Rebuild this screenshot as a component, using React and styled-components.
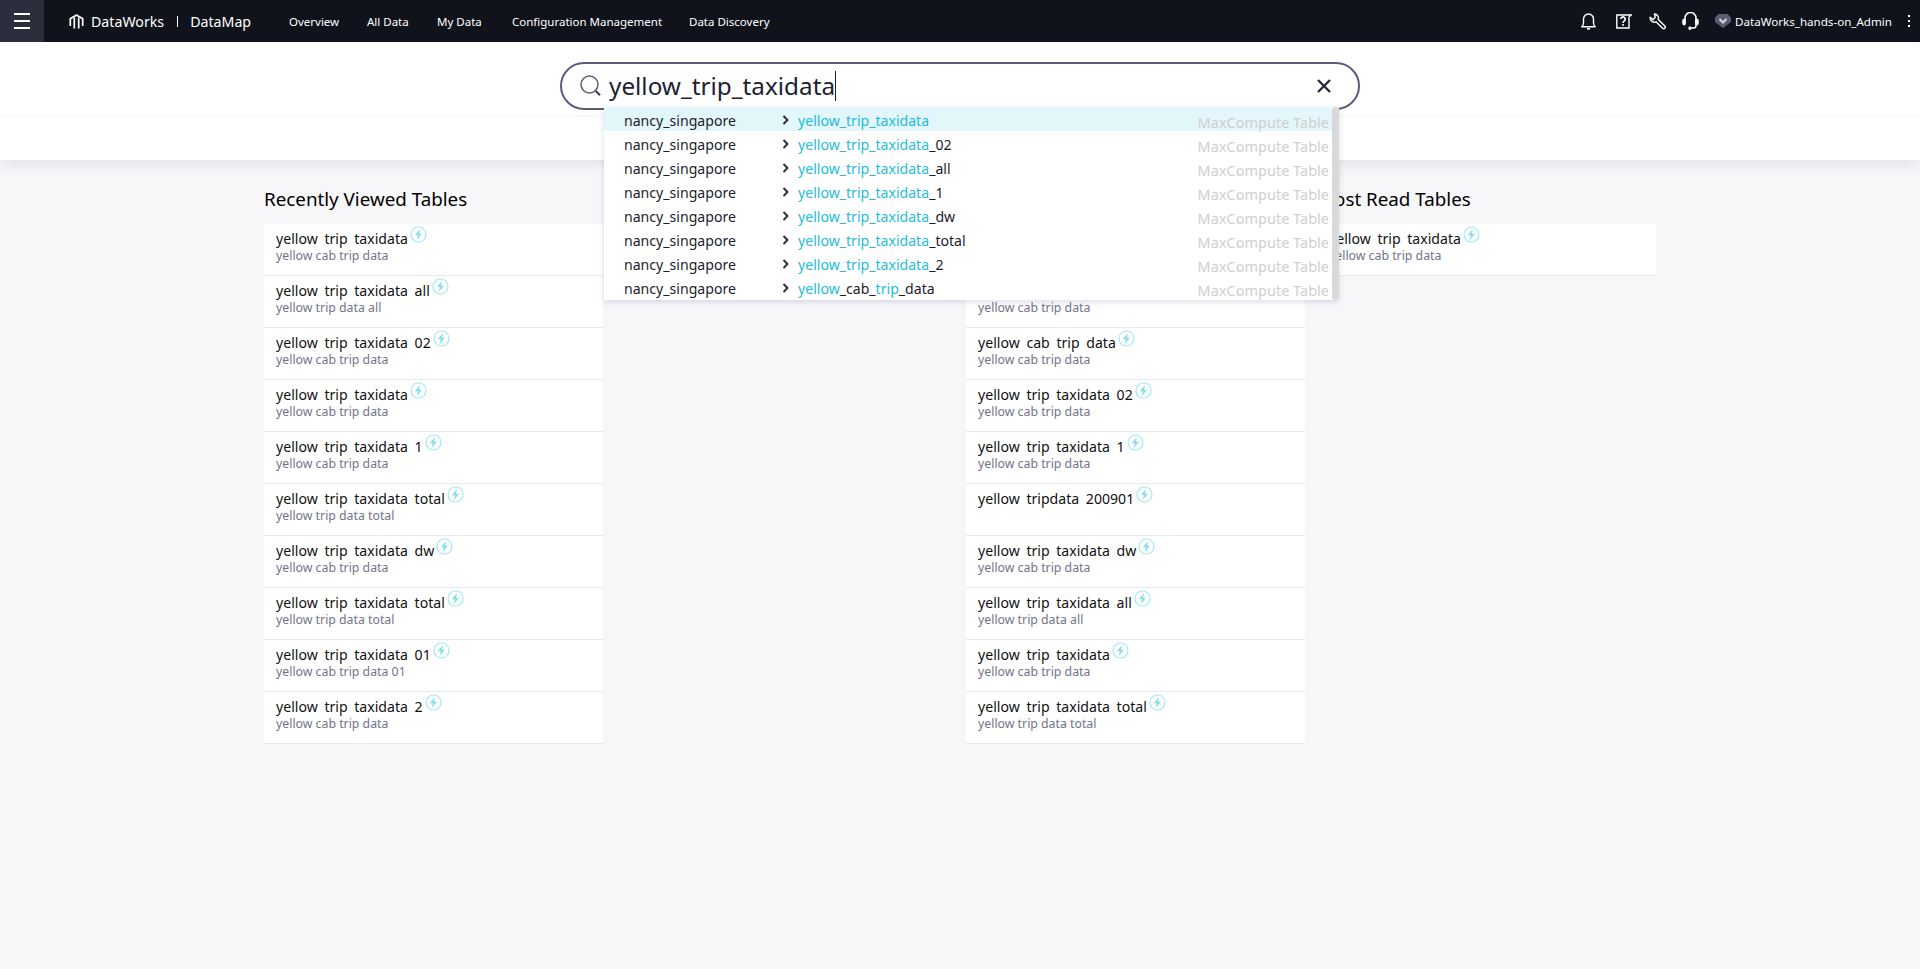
import React from 'react';
import styled, { createGlobalStyle } from 'styled-components';

const GlobalStyle = createGlobalStyle`
  html, body {
    margin: 0;
    padding: 0;
    height: 100%;
    overflow: hidden;
    background: #f7f7fa;
    font-family: "Noto Sans", "Liberation Sans", sans-serif;
  }
`;

const navItems = [
  { label: 'Overview', width: 78 },
  { label: 'All Data', width: 70 },
  { label: 'My Data', width: 75 },
  { label: 'Configuration Management', width: 177 },
  { label: 'Data Discovery', width: 90 },
];

const suggestions = [
  { hit: 'yellow_trip_taxidata', rest: '' },
  { hit: 'yellow_trip_taxidata', rest: '_02' },
  { hit: 'yellow_trip_taxidata', rest: '_all' },
  { hit: 'yellow_trip_taxidata', rest: '_1' },
  { hit: 'yellow_trip_taxidata', rest: '_dw' },
  { hit: 'yellow_trip_taxidata', rest: '_total' },
  { hit: 'yellow_trip_taxidata', rest: '_2' },
  { parts: ['yellow', '_cab_', 'trip', '_data'] },
];

const recentTables = [
  ['yellow trip taxidata', 'yellow cab trip data'],
  ['yellow trip taxidata all', 'yellow trip data all'],
  ['yellow trip taxidata 02', 'yellow cab trip data'],
  ['yellow trip taxidata', 'yellow cab trip data'],
  ['yellow trip taxidata 1', 'yellow cab trip data'],
  ['yellow trip taxidata total', 'yellow trip data total'],
  ['yellow trip taxidata dw', 'yellow cab trip data'],
  ['yellow trip taxidata total', 'yellow trip data total'],
  ['yellow trip taxidata 01', 'yellow cab trip data 01'],
  ['yellow trip taxidata 2', 'yellow cab trip data'],
];

const favouriteTables = [
  ['yellow trip taxidata', 'yellow cab trip data'],
  ['yellow cab trip data', 'yellow cab trip data'],
  ['yellow cab trip data', 'yellow cab trip data'],
  ['yellow trip taxidata 02', 'yellow cab trip data'],
  ['yellow trip taxidata 1', 'yellow cab trip data'],
  ['yellow tripdata 200901', ''],
  ['yellow trip taxidata dw', 'yellow cab trip data'],
  ['yellow trip taxidata all', 'yellow trip data all'],
  ['yellow trip taxidata', 'yellow cab trip data'],
  ['yellow trip taxidata total', 'yellow trip data total'],
];

const mostRead = [['yellow trip taxidata', 'yellow cab trip data']];

const Header = styled.header`
  height: 42px;
  background: #10131c;
  display: flex;
  align-items: center;
  color: #fff;
`;

const MenuButton = styled.div`
  width: 44px;
  height: 42px;
  background: #2b2e3d;
  display: flex;
  flex-direction: column;
  justify-content: center;
  align-items: center;
  gap: 5px;
  span {
    display: block;
    width: 16px;
    height: 2px;
    background: #fff;
  }
`;

const Logo = styled.div`
  display: flex;
  align-items: center;
  margin-left: 25px;
  width: 220px;
  font-size: 14.2px;
  svg { margin-right: 7px; }
`;

const LogoSep = styled.span`
  width: 1px;
  height: 11px;
  background: #fff;
  margin: 0 12px 0 13px;
`;

const NavItem = styled.a`
  font-size: 11.5px;
  color: #fff;
  white-space: nowrap;
  display: block;
  width: ${(p) => p.$width}px;
`;

const HeaderRight = styled.div`
  margin-left: auto;
  display: flex;
  align-items: center;
`;

const HeaderIcon = styled.span`
  width: ${(p) => p.$width || 33}px;
  height: 42px;
  display: flex;
  align-items: center;
  justify-content: ${(p) => (p.$end ? 'flex-end' : 'center')};
  margin-right: ${(p) => p.$gap || 0}px;
`;

const UserName = styled.span`
  font-size: 11.6px;
  margin-left: 4px;
  white-space: nowrap;
`;

const Dots = styled.span`
  display: flex;
  flex-direction: column;
  gap: 3px;
  margin: 0 10px 0 16px;
  i {
    display: block;
    width: 2px;
    height: 2px;
    background: #fff;
  }
`;

const SearchBand = styled.section`
  background: #fff;
  height: 118px;
  box-shadow: 0 4px 14px rgba(40, 40, 70, 0.1);
  position: relative;
`;

const SearchArea = styled.div`
  height: 73px;
  display: flex;
  justify-content: center;
  padding-top: 20px;
  box-sizing: border-box;
  box-shadow: 0 2px 4px rgba(40, 40, 70, 0.03);
`;

const SearchBox = styled.div`
  width: 800px;
  height: 48px;
  box-sizing: border-box;
  border: 2px solid #5c5c7c;
  border-radius: 24px;
  display: flex;
  align-items: center;
  padding: 0 26px 0 17px;
  position: relative;
  background: #fff;
`;

const SearchText = styled.div`
  font-size: 24.3px;
  line-height: 32px;
  color: #1c2233;
  margin-left: 6px;
  flex: 1;
  display: flex;
  align-items: center;
`;

const Caret = styled.i`
  display: block;
  width: 1px;
  height: 30px;
  background: #1c2233;
`;

const Dropdown = styled.div`
  position: absolute;
  left: 42px;
  top: 43px;
  width: 735px;
  height: 193px;
  background: #fff;
  box-shadow: 0 2px 6px rgba(60, 60, 110, 0.18);
  display: flex;
  z-index: 5;
`;

const DropList = styled.div`
  flex: 1 1 0;
  min-width: 0;
`;

const DropRow = styled.div`
  height: 24px;
  box-sizing: border-box;
  padding: 2px 0 0 20px;
  display: flex;
  align-items: center;
  background: ${(p) => (p.$active ? '#e3f7fb' : '#fff')};
  font-size: 14.1px;
  color: #1c1c2c;
  white-space: nowrap;
`;

const DropDb = styled.span`
  width: 156px;
`;

const DropChevron = styled.span`
  width: 18px;
  box-sizing: border-box;
  padding-left: 2px;
  display: flex;
  align-items: center;
`;

const DropName = styled.span`
  flex: 1;
`;

const Hit = styled.span`
  color: #1fbcdc;
`;

const DropType = styled.span`
  color: #cfcfcf;
  font-size: 14.5px;
  margin: 4px 3px 0 0;
`;

const DropScroll = styled.div`
  flex: 0 0 7px;
  height: 100%;
  background: #d9d9d9;
  border-radius: 3px;
`;

const Columns = styled.main`
  display: grid;
  grid-template-columns: repeat(4, 339px);
  column-gap: 12px;
  padding: 25px 0 0 264px;
`;

const ColumnTitle = styled.h3`
  margin: 0 0 11px;
  font-size: 18.8px;
  line-height: 28px;
  font-weight: 400;
  color: #000;
  height: 28px;
  white-space: nowrap;
`;

const TableRow = styled.div`
  height: 52px;
  box-sizing: border-box;
  background: #fff;
  border-bottom: 1px solid #e8e8ee;
  padding: 5px 12px 0;
`;

const TableName = styled.div`
  font-size: 14.1px;
  line-height: 20px;
  height: 19px;
  color: #111;
  word-spacing: 3px;
  display: flex;
  align-items: flex-start;
  white-space: nowrap;
  svg { margin: -3px 0 0 2px; }
`;

const TableDesc = styled.div`
  font-size: 12.3px;
  line-height: 16px;
  color: #73738a;
  white-space: nowrap;
`;

const Bolt = () => (
  <svg width="17" height="17" viewBox="0 0 17 17" fill="none">
    <circle cx="8.500" cy="8.500" r="7.500" stroke="#a4e8f5" strokeWidth="1.200" />
    <path d="M10 3 4.800 9.300h3l-1 4.700 5.200-6.300h-3z" fill="#84def2" />
  </svg>
);

const LogoMark = () => (
  <svg width="15" height="15" viewBox="0 0 15 15" fill="none" stroke="#fff" strokeWidth="1.700">
    <path d="M1.300 12V4.800L7.500 1l6.200 3.800V12" />
    <path d="M5.300 14.500V3.500M9.700 14.500V3.500" />
  </svg>
);

const BellIcon = () => (
  <svg width="15" height="17" viewBox="0 0 15 17" fill="none" stroke="#fff" strokeWidth="1.400">
    <path d="M.8 13.700c1.300-.9 1.700-2 1.700-4V6a5 5 0 0 1 10 0v3.700c0 2 .4 3.100 1.700 4z" strokeLinejoin="round" />
    <path d="M6 15.800h3" strokeWidth="1.600" />
  </svg>
);

const HelpIcon = () => (
  <svg width="16" height="15" viewBox="0 0 16 15" fill="none" stroke="#fff" strokeWidth="1.400">
    <path d="M.8 1h14.400l-2.200 2v11H.8z" />
    <path d="M4.800 5a2.200 2.200 0 1 1 3.500 1.900c-.9.600-1.300 1-1.300 2" strokeWidth="1.700" />
    <path d="M7 10v1.800" strokeWidth="1.700" />
  </svg>
);

const WrenchIcon = () => (
  <svg width="17" height="17" viewBox="0 0 17 17" fill="none" stroke="#fff" strokeWidth="1.400" strokeLinejoin="round">
    <path d="M5.400 1a4.200 4.200 0 0 1 3.800 5.600l6.600 6.500a1.500 1.500 0 0 1-2.200 2.200L7 8.800A4.200 4.200 0 0 1 1.200 4.200l2.700 2.500 2.300-2.500z" />
  </svg>
);

const HeadsetIcon = () => (
  <svg width="17" height="19" viewBox="0 0 17 19" fill="none" stroke="#fff" strokeWidth="1.500">
    <path d="M3 8V6a5.500 5.500 0 0 1 11 0v7.500a2.500 2.500 0 0 1-2.500 2.500H9" />
    <rect x=".8" y="7" width="2.600" height="6" rx="1.300" fill="#fff" strokeWidth="1" />
    <rect x="13.600" y="7" width="2.600" height="6" rx="1.300" fill="#fff" strokeWidth="1" />
    <circle cx="8" cy="16.200" r="1.300" fill="#fff" strokeWidth="1" />
  </svg>
);

const VipIcon = () => (
  <svg width="16" height="14" viewBox="0 0 16 14">
    <path d="M3.500 0h9L16 3.500V8l-8 6-8-6V3.500z" fill="#5c5d70" />
    <path d="m4.500 5 3.500 3.500L11.500 5" fill="none" stroke="#d7d7de" strokeWidth="2" />
  </svg>
);

const SearchIcon = () => (
  <svg width="24" height="24" viewBox="0 0 24 24" fill="none">
    <circle cx="10.500" cy="10.500" r="8.500" stroke="#5c5c7c" strokeWidth="1.500" />
    <path d="m16.800 17 4.200 4.300" stroke="#3c3c52" strokeWidth="2" />
  </svg>
);

const ClearIcon = () => (
  <svg width="16" height="16" viewBox="0 0 16 16" fill="none">
    <path d="m2 2 12 12M14 2 2 14" stroke="#262c3c" strokeWidth="2.400" />
  </svg>
);

const ChevronIcon = () => (
  <svg width="8" height="10" viewBox="0 0 8 10" fill="none">
    <path d="m1.500 1 4 4-4 4" stroke="#2a2a3a" strokeWidth="1.900" />
  </svg>
);

const TableList = ({ rows }) => (
  <div>
    {rows.map(([name, desc], i) => (
      <TableRow key={i}>
        <TableName>
          <span>{name}</span>
          <Bolt />
        </TableName>
        <TableDesc>{desc}</TableDesc>
      </TableRow>
    ))}
  </div>
);

const App = () => {
  return (
    <>
      <GlobalStyle />
      <Header>
        <MenuButton>
          <span />
          <span />
          <span />
        </MenuButton>
        <Logo>
          <LogoMark />
          DataWorks
          <LogoSep />
          DataMap
        </Logo>
        {navItems.map((item) => (
          <NavItem key={item.label} $width={item.width}>{item.label}</NavItem>
        ))}
        <HeaderRight>
          <HeaderIcon $gap={3}><BellIcon /></HeaderIcon>
          <HeaderIcon><HelpIcon /></HeaderIcon>
          <HeaderIcon><WrenchIcon /></HeaderIcon>
          <HeaderIcon><HeadsetIcon /></HeaderIcon>
          <HeaderIcon $width={24} $end><VipIcon /></HeaderIcon>
          <UserName>DataWorks_hands-on_Admin</UserName>
          <Dots><i /><i /><i /></Dots>
        </HeaderRight>
      </Header>
      <SearchBand>
        <SearchArea>
          <SearchBox>
            <SearchIcon />
            <SearchText>
              yellow_trip_taxidata
              <Caret />
            </SearchText>
            <ClearIcon />
            <Dropdown>
              <DropList>
                {suggestions.map((s, i) => (
                  <DropRow key={i} $active={i === 0}>
                    <DropDb>nancy_singapore</DropDb>
                    <DropChevron><ChevronIcon /></DropChevron>
                    <DropName>
                      {s.parts ? (
                        <>
                          <Hit>{s.parts[0]}</Hit>
                          {s.parts[1]}
                          <Hit>{s.parts[2]}</Hit>
                          {s.parts[3]}
                        </>
                      ) : (
                        <>
                          <Hit>{s.hit}</Hit>
                          {s.rest}
                        </>
                      )}
                    </DropName>
                    <DropType>MaxCompute Table</DropType>
                  </DropRow>
                ))}
              </DropList>
              <DropScroll />
            </Dropdown>
          </SearchBox>
        </SearchArea>
      </SearchBand>
      <Columns>
        <div>
          <ColumnTitle>Recently Viewed Tables</ColumnTitle>
          <TableList rows={recentTables} />
        </div>
        <div />
        <div>
          <ColumnTitle>My Favorite Tables</ColumnTitle>
          <TableList rows={favouriteTables} />
        </div>
        <div>
          <ColumnTitle>Most Read Tables</ColumnTitle>
          <TableList rows={mostRead} />
        </div>
      </Columns>
    </>
  );
};

export default App;
